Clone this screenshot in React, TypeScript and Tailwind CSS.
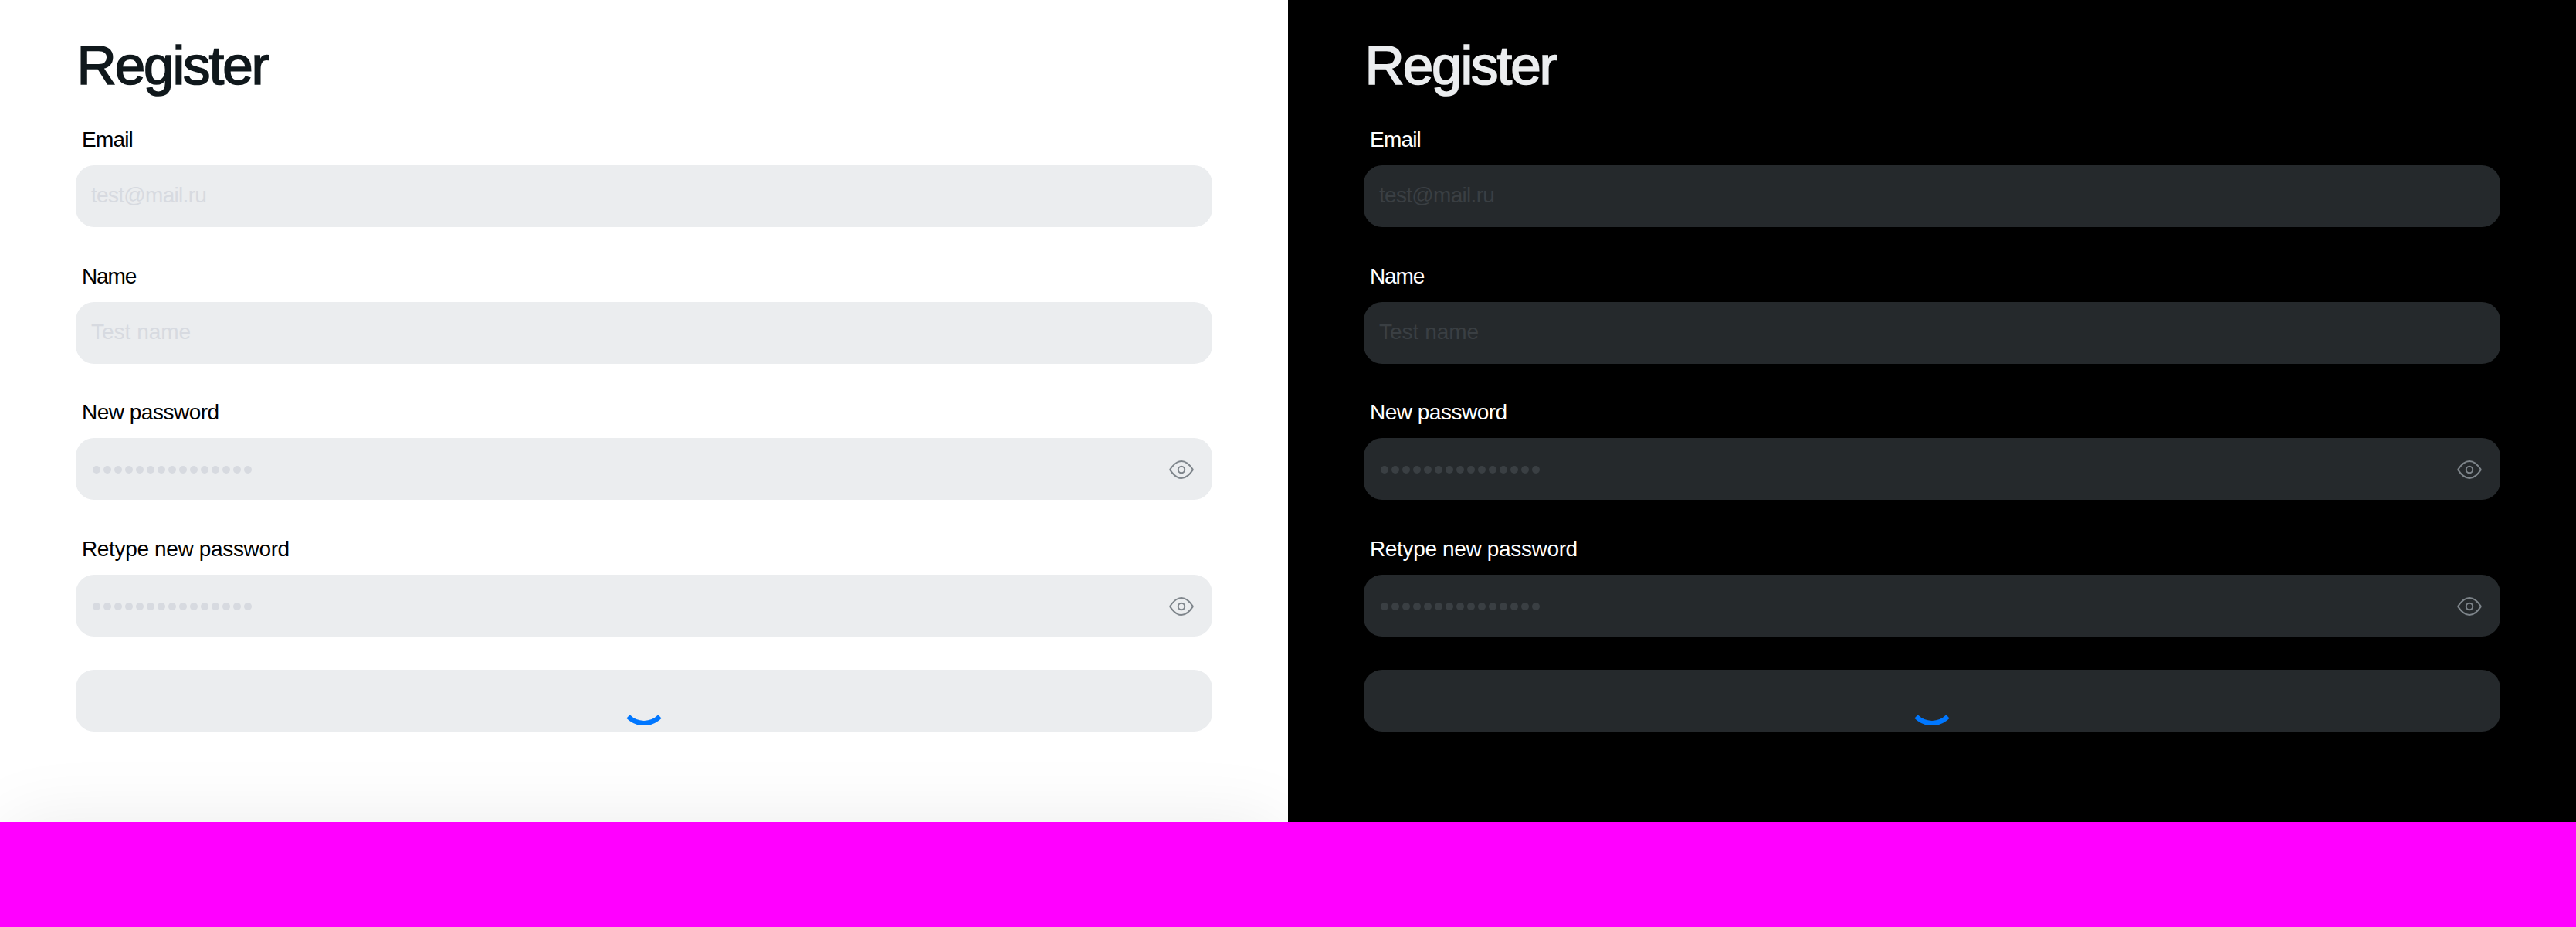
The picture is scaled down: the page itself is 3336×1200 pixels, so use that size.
import React from "react";

type Field = { label: string; labelClass: string; value: string; valueClass: string; secret?: boolean; gap: string };

const fields: Field[] = [
  { label: "Email", labelClass: "tracking-[-0.8px]", value: "test@mail.ru", valueClass: "tracking-[-0.7px]", gap: "mb-[43px]" },
  { label: "Name", labelClass: "tracking-[-1.1px]", value: "Test name", valueClass: "tracking-[0px]", gap: "mb-[42px]" },
  { label: "New password", labelClass: "tracking-[-0.5px]", value: "", valueClass: "", secret: true, gap: "mb-[43px]" },
  { label: "Retype new password", labelClass: "tracking-[-0.35px]", value: "", valueClass: "", secret: true, gap: "mb-[43px]" },
];

function Eye() {
  return (
    <svg width="40" height="40" viewBox="0 0 40 40" fill="none" strokeWidth="2" className="stroke-[#7e858b]">
      <path d="M5.500 19.400C9.800 13 14.500 9 20 9S30.200 13 34.500 19.400Q34.900 20 34.500 20.600C30.200 27 25.500 31 20 31S9.800 27 5.500 20.600Q5.100 20 5.500 19.400Z" />
      <circle cx="20" cy="20" r="4.200" />
    </svg>
  );
}

function Panel({ dark = false }: { dark?: boolean }) {
  const box = dark ? "bg-[#25292c]" : "bg-[#ebedef]";
  const hint = dark ? "text-[#3a3f43]" : "text-[#d7dae0]";
  const dot = dark ? "bg-[#3a3f43]" : "bg-[#d7dae0]";
  return (
    <section className={`relative h-[1064px] w-[1668px] overflow-hidden px-[98px] pt-[47px] ${dark ? "bg-black" : "bg-white"}`}>
      <h1
        className={`ml-[1.500px] h-[113px] text-[71px] leading-[76px] font-normal tracking-[-2.1px] [-webkit-text-stroke:1.7px_currentColor] ${
          dark ? "text-[#ebedef]" : "text-[#10181c]"
        }`}
      >
        Register
      </h1>
      {fields.map((f) => (
        <div key={f.label} className={f.gap}>
          <div className={`ml-[8px] h-[54px] pt-[3px] text-[28px] leading-[36px] whitespace-nowrap ${f.labelClass} ${dark ? "text-white" : "text-black"}`}>
            {f.label}
          </div>
          <div className={`flex h-[80px] items-center justify-between rounded-[24px] px-5 ${box}`}>
            {f.secret ? (
              <div className="mt-[2px] flex gap-1 pl-[1.500px]">
                {Array.from({ length: 15 }, (_, i) => (
                  <span key={i} className={`size-[10px] rounded-full ${dot}`} />
                ))}
              </div>
            ) : (
              <span className={`-mt-[3px] text-[28px] leading-[36px] ${f.valueClass} ${hint}`}>{f.value}</span>
            )}
            {f.secret && (
              <span className="mt-px">
                <Eye />
              </span>
            )}
          </div>
        </div>
      ))}
      <div className={`flex h-[80px] items-center justify-center rounded-[24px] ${box}`}>
        <svg width="64" height="64" viewBox="0 0 64 64" fill="none">
          <path d="M11.490 52.510A29 29 0 0 0 52.510 52.510" stroke="#0077ff" strokeWidth="6.200" />
        </svg>
      </div>
      {!dark && <div className="absolute top-full left-0 h-[200px] w-full rounded-t-[48px] shadow-[0_0_96px_rgba(0,0,0,0.08)]" />}
    </section>
  );
}

export default function App() {
  return (
    <main className="h-[1200px] w-[3336px] overflow-hidden bg-[#ff00ff] font-['Liberation_Sans',Arial,sans-serif]">
      <div className="flex">
        <Panel />
        <Panel dark />
      </div>
    </main>
  );
}
